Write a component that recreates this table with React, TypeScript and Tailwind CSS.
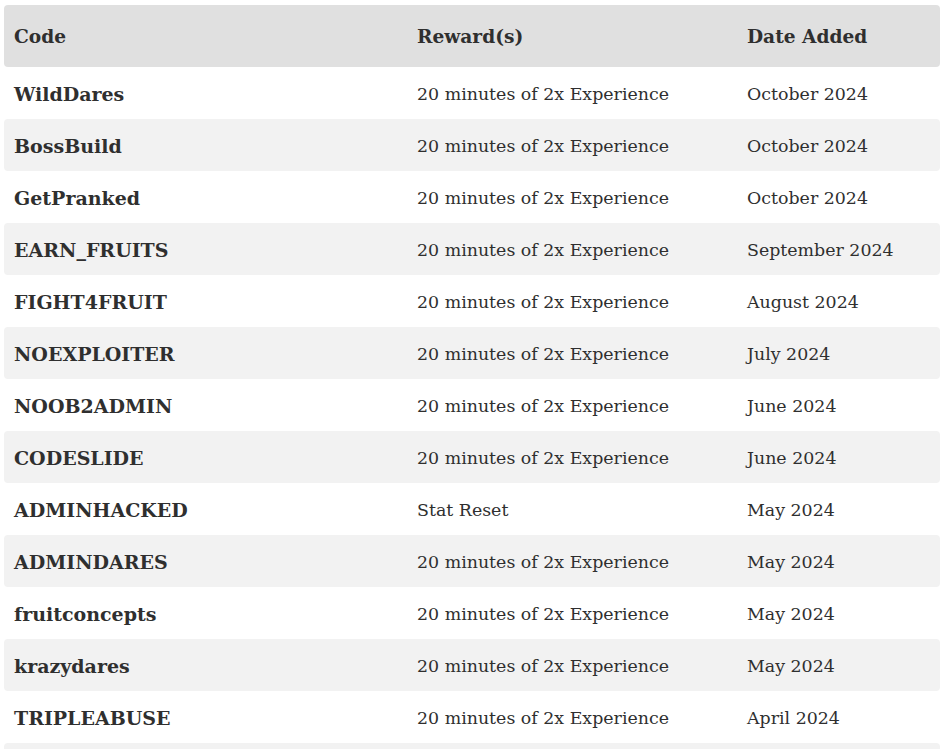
import React from "react";

const rows: [string, string, string][] = [
  ["WildDares", "20 minutes of 2x Experience", "October 2024"],
  ["BossBuild", "20 minutes of 2x Experience", "October 2024"],
  ["GetPranked", "20 minutes of 2x Experience", "October 2024"],
  ["EARN_FRUITS", "20 minutes of 2x Experience", "September 2024"],
  ["FIGHT4FRUIT", "20 minutes of 2x Experience", "August 2024"],
  ["NOEXPLOITER", "20 minutes of 2x Experience", "July 2024"],
  ["NOOB2ADMIN", "20 minutes of 2x Experience", "June 2024"],
  ["CODESLIDE", "20 minutes of 2x Experience", "June 2024"],
  ["ADMINHACKED", "Stat Reset", "May 2024"],
  ["ADMINDARES", "20 minutes of 2x Experience", "May 2024"],
  ["fruitconcepts", "20 minutes of 2x Experience", "May 2024"],
  ["krazydares", "20 minutes of 2x Experience", "May 2024"],
  ["TRIPLEABUSE", "20 minutes of 2x Experience", "April 2024"],
  ["", "", ""],
];

export default function App() {
  return (
    <div
      className="w-[944px] h-[749px] overflow-hidden bg-white pt-[5px] px-[4px] text-[#2f2f2f] text-[17.4px]"
      style={{ fontFamily: '"DejaVu Serif", "Liberation Serif", serif' }}
    >
      <div className="grid grid-cols-[403px_330px_1fr] h-[62px] items-center bg-[#e0e0e0] rounded-[4px] font-bold text-[18.6px] pt-[2px]">
        <div className="px-[10px]">Code</div>
        <div className="px-[10px]">Reward(s)</div>
        <div className="px-[10px]">Date Added</div>
      </div>
      {rows.map((r, i) => (
        <div
          key={i}
          className={
            "grid grid-cols-[403px_330px_1fr] h-[52px] items-center rounded-[4px] pt-[2px] " +
            (i % 2 === 1 ? "bg-[#f2f2f2]" : "bg-white")
          }
        >
          <div className="px-[10px] font-bold text-[19px]">{r[0]}</div>
          <div className="px-[10px]">{r[1]}</div>
          <div className="px-[10px]">{r[2]}</div>
        </div>
      ))}
    </div>
  );
}
